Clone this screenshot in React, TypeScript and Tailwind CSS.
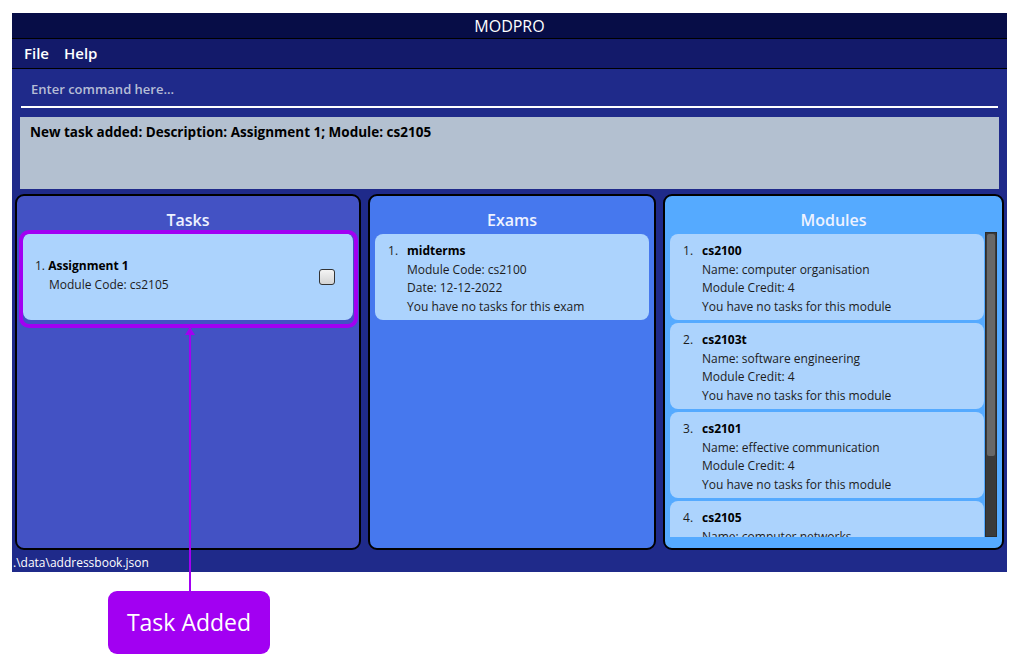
import React from "react";

type Exam = { id: number; name: string; moduleCode: string; date: string };
type Module = { id: number; code: string; name: string; credit: number };

const exams: Exam[] = [{ id: 1, name: "midterms", moduleCode: "cs2100", date: "12-12-2022" }];

const modules: Module[] = [
  { id: 1, code: "cs2100", name: "computer organisation", credit: 4 },
  { id: 2, code: "cs2103t", name: "software engineering", credit: 4 },
  { id: 3, code: "cs2101", name: "effective communication", credit: 4 },
  { id: 4, code: "cs2105", name: "computer networks", credit: 4 },
];

const font = { fontFamily: '"Open Sans", "Noto Sans", sans-serif' };

function Panel({
  title,
  className,
  children,
}: {
  title: string;
  className: string;
  children: React.ReactNode;
}) {
  return (
    <section className={`flex h-full flex-col overflow-hidden rounded-[9px] border-2 border-black ${className}`}>
      <h2 className="flex h-[36px] shrink-0 items-center justify-center pt-[12px] text-[16px] font-semibold text-[#eef2ff]">
        {title}
      </h2>
      {children}
    </section>
  );
}

function Card({ index, title, lines }: { index: number; title: string; lines: string[] }) {
  return (
    <div className="flex h-[86px] shrink-0 rounded-[8px] bg-[#acd3fd] pl-[13px] pt-[8px] text-[12px] leading-[18.5px] text-[#1c1c1c]">
      <span className="w-[19px]">{index}.</span>
      <div>
        <p className="font-bold text-black">{title}</p>
        {lines.map(l => (
          <p key={l}>{l}</p>
        ))}
      </div>
    </div>
  );
}

export default function App() {
  return (
    <div className="relative min-h-[666px] bg-white pl-[12px] pt-[13px]" style={font}>
      <div className="flex h-[559px] w-[995px] flex-col bg-[#1f2a8a]">
        <header className="flex h-[26px] shrink-0 items-center justify-center border-b border-black bg-[#070d47] text-[16px] text-white">
          MODPRO
        </header>
        <nav className="flex h-[30px] shrink-0 items-center gap-[15px] border-b border-black bg-[#131a6a] pl-[12px] text-[15px] font-semibold text-white">
          <span>File</span>
          <span>Help</span>
        </nav>

        <div className="mx-[9px] mt-[8px] flex h-[31px] shrink-0 items-center border-b-2 border-white pb-[4px] pl-[10px] text-[13px] font-semibold text-[#b6bdd6]">
          Enter command here...
        </div>

        <div className="mx-[8px] mt-[9px] h-[72px] shrink-0 bg-[#b3c0d0] px-[10px] pt-[5px] text-[13.5px] font-bold text-black">
          New task added: Description: Assignment 1; Module: cs2105
        </div>

        <div className="mt-[5px] flex h-[356px] shrink-0 gap-[7px] pl-[3px]">
          <div className="w-[346px]">
            <Panel title="Tasks" className="bg-[#4352c4]">
              <div className="px-[6px] pt-px">
                <div className="flex h-[87px] items-center justify-between rounded-[8px] bg-[#acd3fd] pl-[12px] pr-[18px] text-[12px] leading-[19px] text-[#1c1c1c]">
                  <div className="-mt-[4px]">
                    <p>
                      1. <span className="font-bold text-black">Assignment 1</span>
                    </p>
                    <p className="pl-[14px]">Module Code: cs2105</p>
                  </div>
                  <span className="h-[16px] w-[16px] rounded-[3px] border-[1.5px] border-[#333] bg-gradient-to-b from-[#f4f4f4] to-[#d4d4d4]" />
                </div>
              </div>
            </Panel>
          </div>

          <div className="w-[288px]">
            <Panel title="Exams" className="bg-[#4678ee]">
              <div className="px-[5px] pt-[2px]">
                {exams.map(e => (
                  <Card
                    key={e.id}
                    index={e.id}
                    title={e.name}
                    lines={[`Module Code: ${e.moduleCode}`, `Date: ${e.date}`, "You have no tasks for this exam"]}
                  />
                ))}
              </div>
            </Panel>
          </div>

          <div className="w-[341px]">
            <Panel title="Modules" className="bg-[#55aaff]">
              <div className="flex h-[305px] pl-[5px] pr-[5px]">
                <div className="flex flex-1 flex-col gap-[3px] overflow-hidden pt-[2px]">
                  {modules.map(m => (
                    <Card
                      key={m.id}
                      index={m.id}
                      title={m.code}
                      lines={[`Name: ${m.name}`, `Module Credit: ${m.credit}`, "You have no tasks for this module"]}
                    />
                  ))}
                </div>
                <div className="ml-px w-[12px] shrink-0 border border-[#2c2c2c] bg-[#3a3a3a] p-[1px]">
                  <div className="h-[222px] rounded-[2px] bg-[#686868]" />
                </div>
              </div>
            </Panel>
          </div>
        </div>

        <footer className="flex flex-1 items-center pl-[1px] pt-[4px] text-[12px] text-white">.\data\addressbook.json</footer>
      </div>

      {/* annotation overlay */}
      <div className="pointer-events-none absolute left-[19px] top-[230px] h-[98px] w-[339px] rounded-[10px] border-[4px] border-[#a200f2]" />
      <div className="absolute left-[189px] top-[328px] h-[263px] w-[2px] bg-[#a200f2]" />
      <svg className="absolute left-[185px] top-[327px]" width="10" height="8" viewBox="0 0 10 8">
        <path d="M5 0 L10 8 L0 8 Z" fill="#a200f2" />
      </svg>
      <div className="absolute left-[108px] top-[591px] flex h-[63px] w-[162px] items-center justify-center rounded-[9px] bg-[#a200f2] text-[23px] text-white">
        Task Added
      </div>
    </div>
  );
}
